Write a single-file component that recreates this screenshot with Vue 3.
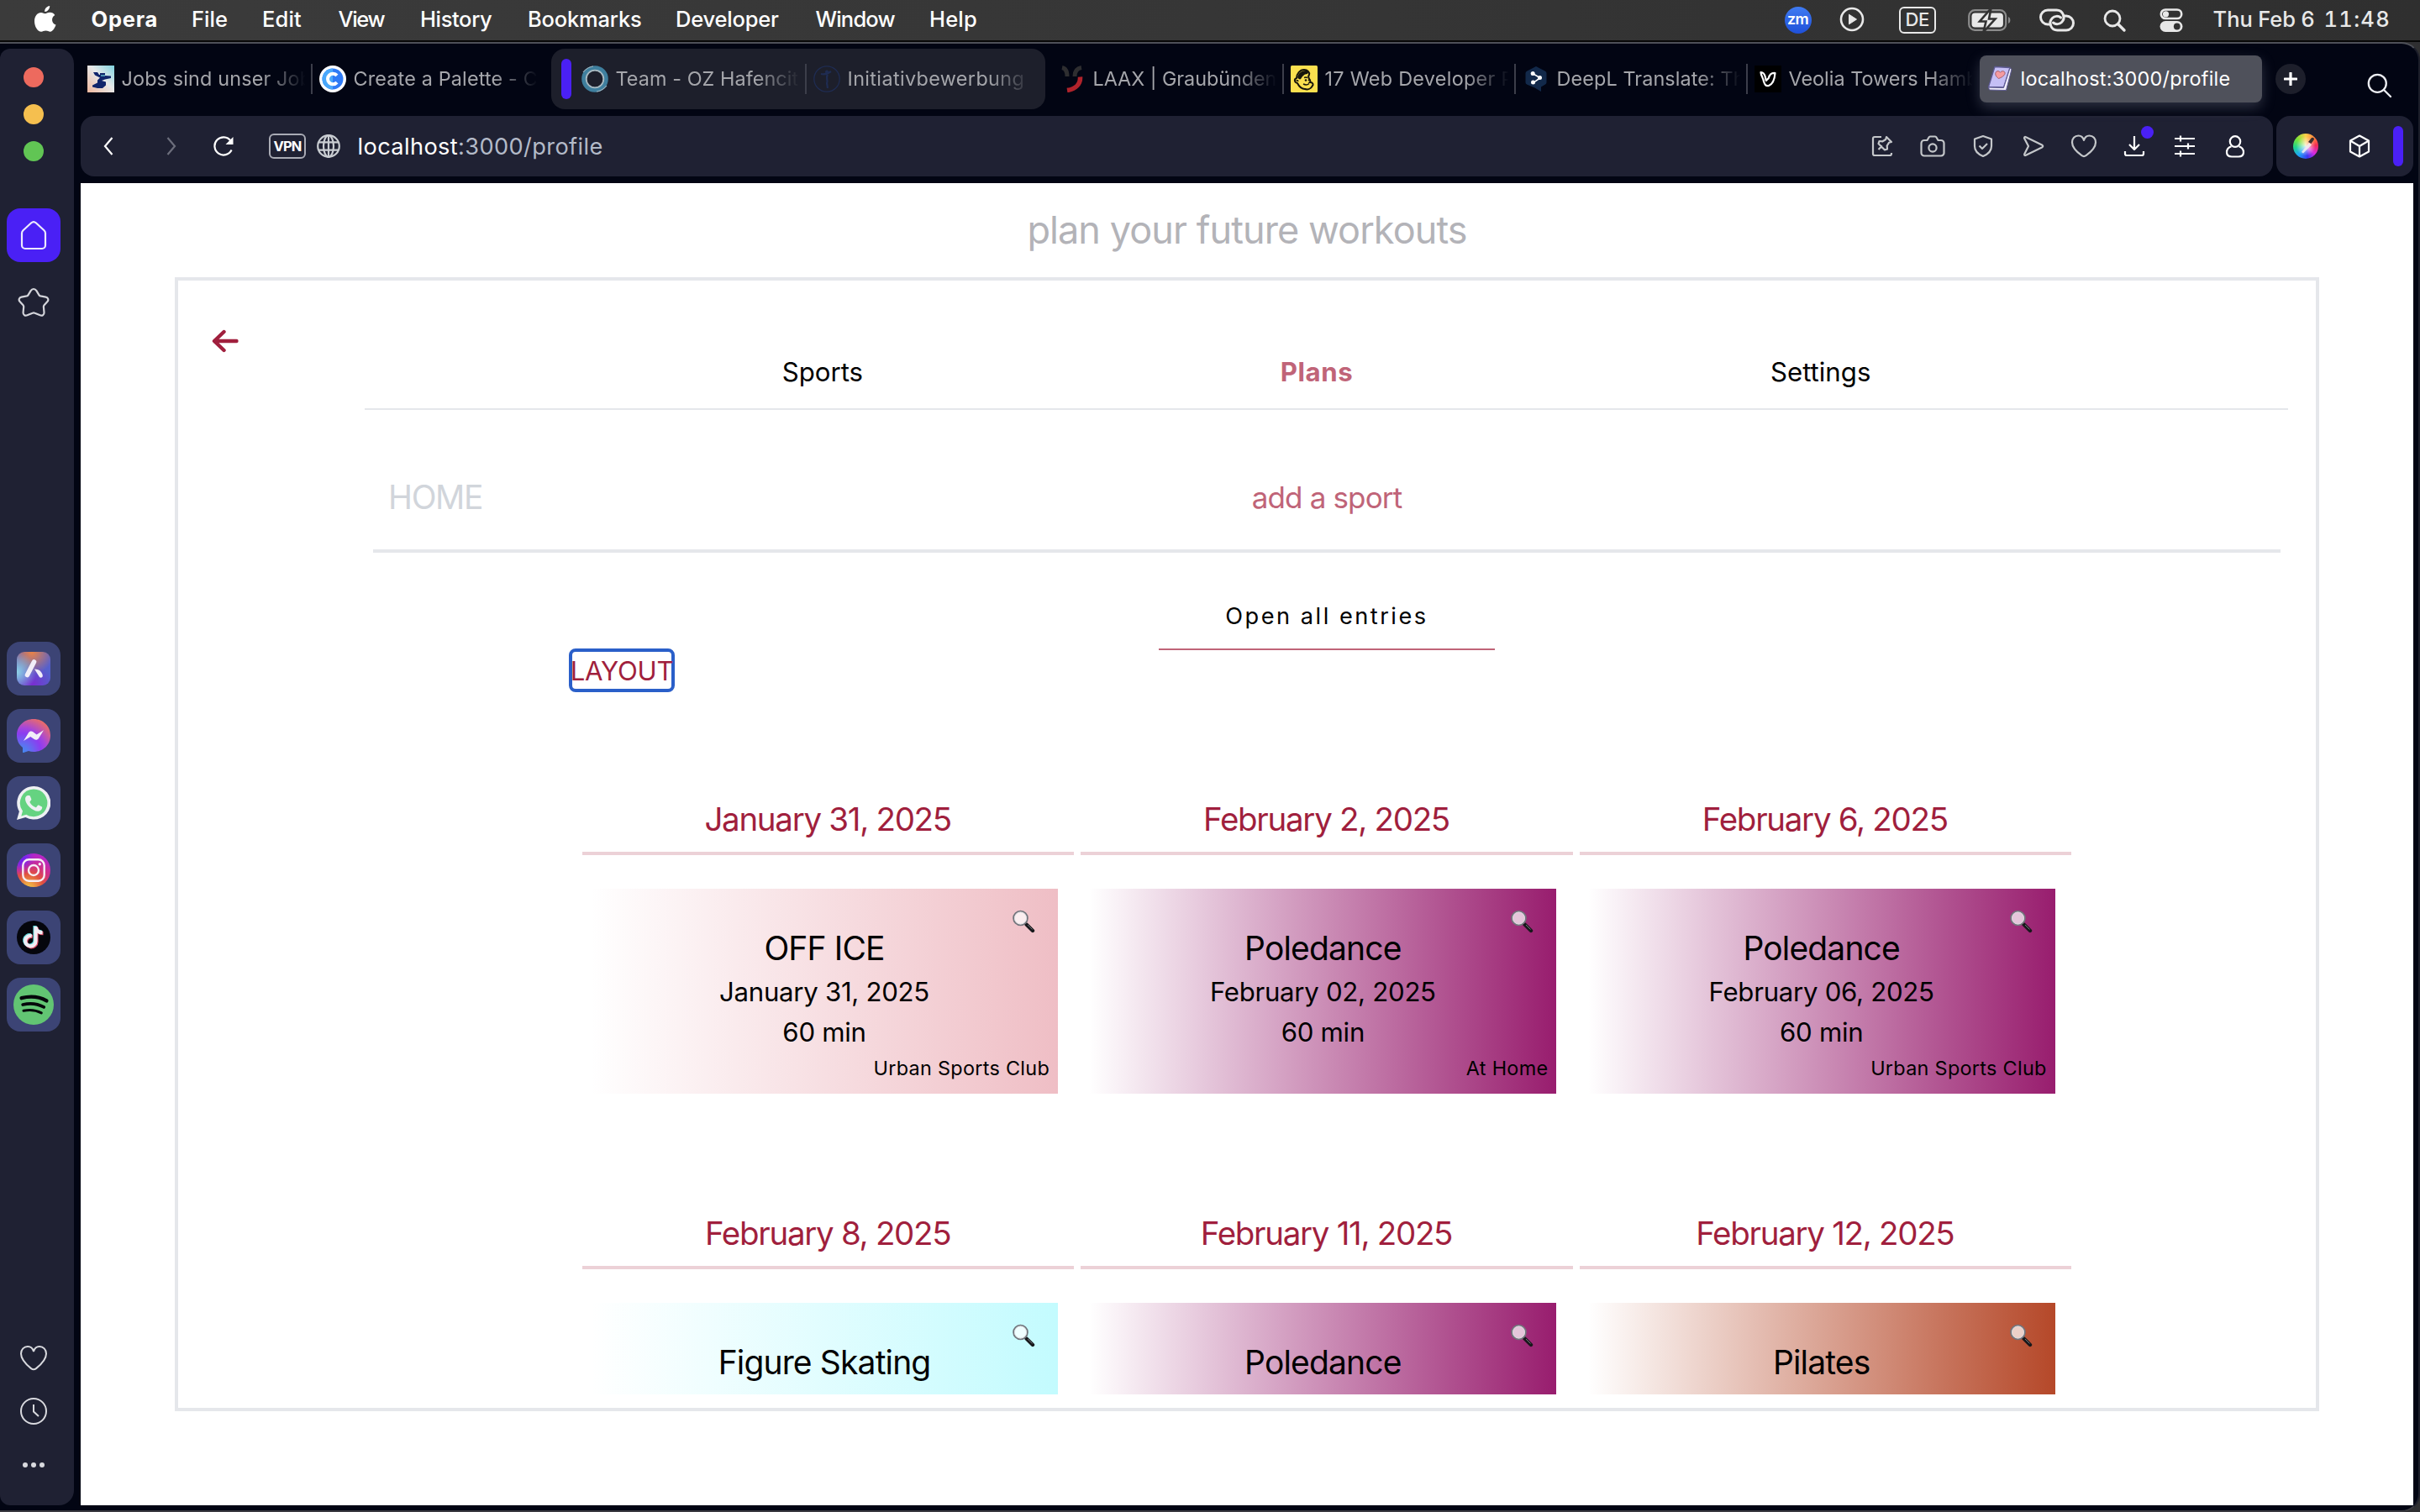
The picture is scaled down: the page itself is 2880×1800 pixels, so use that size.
<script setup>
const menus = [
  { label: 'Opera', width: 119.5, spacing: 0.76, bold: true },
  { label: 'File', width: 84, spacing: 0.04 },
  { label: 'Edit', width: 90.5, spacing: 0.14 },
  { label: 'View', width: 97.5, spacing: -1.35 },
  { label: 'History', width: 128, spacing: -0.37 },
  { label: 'Bookmarks', width: 176, spacing: -0.18 },
  { label: 'Developer', width: 166.5, spacing: -0.2 },
  { label: 'Window', width: 135.5, spacing: -0.82 },
  { label: 'Help', width: 60, spacing: 0.2 },
]

const sections = [
  { label: 'Sports', active: false },
  { label: 'Plans', active: true },
  { label: 'Settings', active: false },
]

const plans = [
  { day: 'January 31, 2025', sport: 'OFF ICE', date: 'January 31, 2025', minutes: 60, place: 'Urban Sports Club', color: '#efbec5' },
  { day: 'February 2, 2025', sport: 'Poledance', date: 'February 02, 2025', minutes: 60, place: 'At Home', color: '#981d6e' },
  { day: 'February 6, 2025', sport: 'Poledance', date: 'February 06, 2025', minutes: 60, place: 'Urban Sports Club', color: '#981d6e' },
  { day: 'February 8, 2025', sport: 'Figure Skating', color: '#c3fbfe' },
  { day: 'February 11, 2025', sport: 'Poledance', color: '#981d6e' },
  { day: 'February 12, 2025', sport: 'Pilates', color: '#b54829' },
]
</script>

<template>
  <div class="desktop">
    <header class="menubar">
      <svg class="apple" viewBox="0 0 26 31" width="26" height="31">
        <path fill="#fff" d="M18.2 0c.2 3.6-2.7 7-6 7C11.800 3.600 14.900.300 18.200 0ZM12.800 9.200c1.100 0 3.100-1.600 5.800-1.400 2.300.1 4.400 1.100 5.700 3.100-4.900 3.100-4 9.800 1.200 11.700-.9 2.900-3.500 8.200-6.700 8.200-2 0-2.900-1.200-5.300-1.200-2.500 0-3.500 1.200-5.300 1.200C3.700 30.800 0 24.500 0 18.300 0 11.900 3.900 7.900 7.800 7.900c2.200 0 3.900 1.300 5 1.300Z" />
      </svg>
      <nav class="menus">
        <span
          v-for="m in menus"
          :key="m.label"
          :class="{ strong: m.bold }"
          :style="{ width: m.width + 'px', letterSpacing: m.spacing + 'px' }"
        >{{ m.label }}</span>
      </nav>
      <div class="status">
        <span class="zoom-app">zm</span>
        <svg class="s-play" width="30" height="30" viewBox="0 0 30 30"><circle cx="15" cy="15" r="13" fill="none" stroke="#e8e8e8" stroke-width="2.600" /><path d="M11.500 9.200v11.600L20.500 15Z" fill="#e8e8e8" stroke="#e8e8e8" stroke-linejoin="round" /></svg>
        <span class="lang">DE</span>
        <svg class="s-bat" width="52" height="26" viewBox="0 0 52 26">
          <rect x="1.200" y="1.200" width="44" height="23.600" rx="7" fill="none" stroke="#8c8c8c" stroke-width="2.200" />
          <rect x="4.500" y="4.500" width="37.400" height="17" rx="4" fill="#e8e8e8" />
          <path d="M48 9v8c3.200-1.200 3.200-6.800 0-8Z" fill="#8c8c8c" />
          <path d="M27.500-1 14 14.500h7.500L18.500 27 32.500 11.500H25Z" fill="#e8e8e8" stroke="#323232" stroke-width="2.600" />
        </svg>
        <svg class="s-link" width="44" height="28" viewBox="0 0 44 28" fill="none" stroke="#e8e8e8" stroke-width="3" stroke-linecap="round">
          <path d="M14 19H11A8.500 8.500 0 0 1 11 2h10.500a8.500 8.500 0 0 1 6 14.500c-2.500 2.500-7 3-10 .5" />
          <path d="M30 9h3a8.500 8.500 0 0 1 0 17H22.500a8.500 8.500 0 0 1-6-14.500c2.500-2.500 7-3 10-.5" />
        </svg>
        <svg class="s-find" width="28" height="28" viewBox="0 0 28 28" fill="none" stroke="#e8e8e8" stroke-linecap="round"><circle cx="11" cy="11" r="9" stroke-width="2.800" /><path d="m18 18 7 7" stroke-width="3.400" /></svg>
        <svg class="s-ctl" width="28" height="28" viewBox="0 0 28 28">
          <rect x="1.800" y="1.500" width="24.400" height="10.500" rx="5.250" fill="none" stroke="#e8e8e8" stroke-width="2.600" /><circle cx="7.500" cy="6.800" r="3.600" fill="#e8e8e8" />
          <rect x="0.500" y="15" width="27" height="13" rx="6.500" fill="#e8e8e8" /><circle cx="20.800" cy="21.500" r="3.900" fill="#323232" />
        </svg>
        <span class="date">Thu Feb 6</span>
        <span class="clock">11:48</span>
      </div>
    </header>

    <div class="window">
      <aside class="sidebar">
        <div class="lights"><i class="red"></i><i class="amber"></i><i class="green"></i></div>
        <div class="tile home">
          <svg width="32" height="36" viewBox="0 0 32 36"><path d="M3.500 12.200 13.300 3.300a4 4 0 0 1 5.400 0l9.800 8.900q1.500 1.400 1.500 3.400V30a4 4 0 0 1-4 4H6a4 4 0 0 1-4-4V15.600q0-2 1.500-3.400Z" fill="none" stroke="#eceafd" stroke-width="2.200" /></svg>
        </div>
        <svg class="star" width="38" height="36" viewBox="0 0 38 36"><path d="M19 2c1.500 0 2.600.8 3.400 2.100l3 5c.4.700 1 1.100 1.800 1.300l6.300 1.300c2.800.6 3.700 3.400 1.900 5.400l-3.800 4.200c-.5.600-.8 1.300-.7 2.100l.6 6.400c.2 2.800-2.200 4.600-4.800 3.500l-6.200-2.600a3.500 3.500 0 0 0-2.900 0l-6.200 2.600c-2.600 1.100-5-.7-4.800-3.500l.6-6.400c.1-.8-.2-1.500-.7-2.100l-3.900-4.200c-1.800-2-.9-4.800 1.900-5.400l6.300-1.300c.8-.2 1.400-.6 1.800-1.300l3-5C16.400 2.800 17.500 2 19 2Z" fill="none" stroke="#d3d4da" stroke-width="2.200" /></svg>

        <div class="apps">
          <div class="tile">
            <span class="aria"><svg width="40" height="40" viewBox="0 0 40 40"><path d="M20.500 12 12.500 27.500" stroke="#f1eef8" stroke-width="5.600" stroke-linecap="round" /><path d="M21 20.500c5 .200 8.500 2.300 9.800 7.500.5 2.300-2.500 3.700-4 1.800Z" fill="#f1eef8" /></svg></span>
          </div>
          <div class="tile">
            <svg width="40" height="40" viewBox="0 0 40 40">
              <defs><radialGradient id="msg" cx="0.150" cy="1" r="1.150"><stop offset="0" stop-color="#3f8df2" /><stop offset="0.200" stop-color="#5c73f0" /><stop offset="0.500" stop-color="#8b3df0" /><stop offset="0.640" stop-color="#a445dc" /><stop offset="1" stop-color="#f2705c" /></radialGradient></defs>
              <path d="M20 0c11.500 0 20 8.500 20 19.500S31.500 39 20 39c-2.200 0-4.200-.3-6-.9L8 40c-.6.200-1-.1-1-.7V34C2.500 30.500 0 25.500 0 19.500 0 8.500 8.500 0 20 0Z" fill="url(#msg)" />
              <path d="M8 26 14 16.300c1.200-1.900 3.600-2.300 5.300-1l4.300 3.200L32 13.300l-6 9.800c-1.200 1.900-3.600 2.300-5.300 1l-4.400-3.200Z" fill="#f1eef8" />
            </svg>
          </div>
          <div class="tile">
            <svg width="40" height="40" viewBox="0 0 40 40">
              <path d="M20 0a20 19.800 0 1 1-9.600 37L0 40l2.900-10A20 20 0 0 1 20 0Z" fill="#eef0f3" />
              <path d="M20 3.400a16.400 16.400 0 1 1-8.700 30.300l-6 1.700 1.700-6A16.400 16.400 0 0 1 20 3.400Z" fill="#65d381" />
              <path d="M14.700 11c.5 0 1 .2 1.200.8l1.400 3.400c.2.600 0 1-.3 1.400l-1.300 1.600c-.3.400-.3.700-.1 1.100 1.500 2.700 3.700 4.600 6.500 5.800.5.200.8.100 1.100-.2l1.600-2c.4-.5.8-.6 1.300-.4l3.400 1.700c.5.300.8.500.7 1.300-.2 2.600-2.500 4.200-5 4.200C18.500 29.500 10 21.500 10 14.900c0-2.100 1.400-3.900 3.400-3.900Z" fill="#eef0f3" />
            </svg>
          </div>
          <div class="tile">
            <svg width="40" height="40" viewBox="0 0 40 40">
              <defs>
                <radialGradient id="igA" cx="0.350" cy="1.050" r="1"><stop offset="0" stop-color="#f0c948" /><stop offset="0.150" stop-color="#efa843" /><stop offset="0.450" stop-color="#e0503f" /><stop offset="0.700" stop-color="#d03085" /><stop offset="1" stop-color="#b827c4" /></radialGradient>
                <radialGradient id="igB" cx="0.080" cy="0.100" r="0.550"><stop offset="0" stop-color="#5a22f0" /><stop offset="0.400" stop-color="#7a26ee" stop-opacity="0.900" /><stop offset="1" stop-color="#b827c4" stop-opacity="0" /></radialGradient>
              </defs>
              <circle cx="20" cy="20" r="20" fill="url(#igA)" /><circle cx="20" cy="20" r="20" fill="url(#igB)" />
              <rect x="7.300" y="7.300" width="25.400" height="25.400" rx="7" fill="none" stroke="#f6eef4" stroke-width="2.400" />
              <circle cx="20" cy="20" r="6" fill="none" stroke="#f6eef4" stroke-width="2.400" /><circle cx="27.300" cy="12.800" r="1.700" fill="#f6eef4" />
            </svg>
          </div>
          <div class="tile">
            <svg width="40" height="40" viewBox="0 0 40 40" fill="none" stroke-width="4.200">
              <circle cx="20" cy="20" r="20" fill="#05060c" />
              <path d="M17.500 17.700a6.200 6.200 0 1 0 4.700 6V6.500c0 4 3 7.200 8 7.200" stroke="#5fd9dc" transform="translate(-.7 -.4)" />
              <path d="M17.500 17.700a6.200 6.200 0 1 0 4.700 6V6.500c0 4 3 7.200 8 7.200" stroke="#e0506a" transform="translate(1.300 1.500)" />
              <path d="M17.500 17.700a6.200 6.200 0 1 0 4.700 6V6.500c0 4 3 7.200 8 7.200" stroke="#f1eef4" transform="translate(.3 .5)" />
            </svg>
          </div>
          <div class="tile">
            <svg width="48" height="48" viewBox="0 0 48 48" fill="none" stroke="#05070a" stroke-linecap="round">
              <circle cx="24" cy="24" r="24" fill="#62c573" stroke="none" />
              <path d="M9.600 16.200c10-2.600 21-1.800 29.800 3.200" stroke-width="4.400" /><path d="M11.200 24c8.500-2.200 17.300-1.300 25 2.900" stroke-width="3.800" /><path d="M12 31.300c7.500-1.600 14.700-.9 21.300 2.600" stroke-width="3" />
            </svg>
          </div>
        </div>

        <div class="tools">
          <svg width="32" height="30" viewBox="0 0 32 30"><path d="M16 7C15 3 12 1 9 1 4.500 1 1 4.500 1 9.500c0 6.500 5 12 12 17.600q3 2.400 6 0C26 21.500 31 16 31 9.500 31 4.500 27.500 1 23 1c-3 0-6 2-7 6Z" fill="none" stroke="#d8d9de" stroke-width="2" /></svg>
          <svg class="history" width="32" height="32" viewBox="0 0 32 32" fill="none" stroke="#d8d9de" stroke-width="2"><circle cx="16" cy="16" r="15" /><path d="M16 8v8.500l6 5.500" /></svg>
          <svg class="more" width="26" height="6" viewBox="0 0 26 6" fill="#d8d9de"><circle cx="3" cy="3" r="3" /><circle cx="13" cy="3" r="3" /><circle cx="23" cy="3" r="3" /></svg>
        </div>
      </aside>

      <div class="browser">
        <div class="tabstrip">
          <div class="tab">
            <svg width="32" height="32" viewBox="0 0 32 32">
              <defs><linearGradient id="jb" x1="1" y1="0" x2="0" y2="1"><stop offset="0" stop-color="#7fd3e0" /><stop offset="0.450" stop-color="#e6e9ea" /><stop offset="1" stop-color="#f0b89e" /></linearGradient></defs>
              <rect width="32" height="32" fill="url(#jb)" />
              <path d="M7 8h5l2 3h1V9h6v3l7 .5v2.500l-7 1.500-4 1.500 5 1.500v4l-4 3.500h-6l-6-1.500v-2l6-3v-3l3-3-6-3Z" fill="#10256b" />
              <path d="M16 11h5v2h-5Z" fill="#4a8fb0" />
            </svg>
            <span class="t" style="letter-spacing: 0.14px">Jobs sind unser Job</span>
          </div>
          <div class="tab split">
            <svg width="32" height="32" viewBox="0 0 32 32">
              <circle cx="16" cy="16" r="16" fill="#fff" /><circle cx="16" cy="16" r="12.500" fill="#2f7bf6" /><path d="M16 3.500a12.500 12.500 0 0 0 0 25Z" fill="#49a8fb" />
              <path d="M21 11.800a6.300 6.300 0 1 0 0 8.400" fill="none" stroke="#fff" stroke-width="4" />
            </svg>
            <span class="t" style="letter-spacing: 0.15px">Create a Palette - C</span>
          </div>
          <div class="island">
            <i class="bar"></i>
            <div class="tab">
              <svg width="32" height="32" viewBox="0 0 32 32" fill="none"><circle cx="16" cy="16" r="12.800" stroke="#3f7f9e" stroke-width="6" /><circle cx="16" cy="16" r="10.300" stroke="#a9b9c0" stroke-width="1.800" /><path d="M2 8C6 3 9 1.500 14 1M18 31c5-.5 8-2 12-7" stroke="#9fb4bf" stroke-width="1.200" /></svg>
              <span class="t" style="letter-spacing: 0.07px">Team - OZ Hafencit</span>
            </div>
            <div class="tab split">
              <svg width="32" height="32" viewBox="0 0 32 32" fill="none" stroke="#1f2c52"><circle cx="16" cy="16" r="15.200" stroke-width="1.300" /><path d="M9 10c4 1 8 0 12-3M17 11c-3 4 1 6-1 10l1 6" stroke-width="2.200" /><circle cx="16" cy="7.500" r="1.600" fill="#1f2c52" /></svg>
              <span class="t" style="letter-spacing: 0.36px">Initiativbewerbung |</span>
            </div>
          </div>
          <div class="tab">
            <svg width="32" height="32" viewBox="0 0 32 32" fill="none" stroke-width="5"><path d="M4 2.500c5 1 6 5 6 10.500M27 2.500c-6 1-8 5-8 10.500" stroke="#2e2e30" /><path d="M25.500 13.500C26 22 20 28 10 29.500" stroke="#b0232b" stroke-width="5.600" /></svg>
            <span class="t" style="letter-spacing: -0.05px">LAAX | Graubünden</span>
          </div>
          <div class="tab split">
            <svg width="32" height="32" viewBox="0 0 32 32">
              <rect width="32" height="32" rx="1.500" fill="#fbe04f" />
              <path d="M8 21c-4-1-4-5-1-6 0-5 4-10 9-10 4 0 7 3 6 6-1 1-1 3 0 5 1 1 2 3 1 4 4 0 4 3 3 4-2 4-6 5-9 4-4 0-7-3-9-7Z" fill="none" stroke="#17150c" stroke-width="2" />
              <path d="M8 14c1-5 5-8 10-8 3 0 4 2 2 4-4 0-6 3-8 6-1 1-3 0-4-2Z" fill="#17150c" /><path d="M16 14.500q2-1 4 0M15 22q4 2 7-.5M6.500 18q2-1 2.500 1" stroke="#17150c" stroke-width="1.500" fill="none" /><circle cx="18" cy="17.500" r="1.300" fill="#17150c" /><circle cx="21.800" cy="17.500" r="1.100" fill="#17150c" />
            </svg>
            <span class="t" style="letter-spacing: 0.28px">17 Web Developer P</span>
          </div>
          <div class="tab split">
            <svg width="32" height="32" viewBox="0 0 32 32">
              <path d="M16 1 27 6.800q1.500.8 1.500 2.500V20q0 1.600-1.500 2.500l-5 3V31l-7.500-4.500L5 22.500Q3.500 21.600 3.500 20V9.300Q3.500 7.600 5 6.800Z" fill="#12294a" />
              <path d="m12 9.500 9 5.200-8.500 6" stroke="#fff" stroke-width="1.600" fill="none" /><g fill="#fff"><circle cx="12.200" cy="9.500" r="2.500" /><circle cx="20.500" cy="14.500" r="2.500" /><circle cx="12.500" cy="20" r="2.500" /></g>
            </svg>
            <span class="t" style="letter-spacing: 0.1px">DeepL Translate: Th</span>
          </div>
          <div class="tab split">
            <svg width="32" height="32" viewBox="0 0 32 32"><rect width="32" height="32" fill="#000" /><path d="M7.500 8c3 .3 4.500 2 5.300 5.500l1 4.500 3-3c1-4 3.500-6.500 7.700-6-.5 7-2.500 13-7.500 15-4 1-5-2-6-5C10.500 15 7.500 12 7.500 8Z" fill="none" stroke="#fff" stroke-width="2.200" stroke-linejoin="round" /></svg>
            <span class="t">Veolia Towers Hamb</span>
          </div>
          <div class="tab current">
            <svg width="32" height="32" viewBox="0 0 32 32">
              <path d="M10 1.500 28 2.500 20.500 26 2.500 25.500Z" fill="#c5bff5" stroke="#5d5a92" stroke-width="1.300" stroke-linejoin="round" />
              <path d="M2.500 26 20.500 26.500 28 3l2 1.500-6.500 25-20-.5Z" fill="#f2effc" stroke="#5d5a92" stroke-width="1" stroke-linejoin="round" />
              <path d="M14.500 15.500c-4-3-4.500-6-3-8 1.500-1.500 4-1 5 .8 1.200-1.800 4-2.300 5.300-.4 1.200 2-1.300 5.600-7.300 7.600Z" fill="#f59ba0" stroke="#9c5560" stroke-width=".9" />
            </svg>
            <span class="t" style="letter-spacing: 0.26px">localhost:3000/profile</span>
          </div>
          <span class="plus"><svg width="16" height="16" viewBox="0 0 16 16"><path d="M8 1v14M1 8h14" stroke="#fff" stroke-width="3.200" stroke-linecap="round" /></svg></span>
          <svg class="tab-search" width="30" height="30" viewBox="0 0 30 30" fill="none" stroke="#eceef2" stroke-width="2.300"><circle cx="12.300" cy="12.300" r="10.500" /><path d="m20 20 8 8" stroke-linecap="round" /></svg>
        </div>

        <div class="toolbar">
          <div class="address">
            <svg class="back" width="12" height="22" viewBox="0 0 12 22" fill="none" stroke="#fff" stroke-width="2.200"><path d="M10.500 1 2 11l8.500 10" /></svg>
            <svg class="fwd" width="12" height="22" viewBox="0 0 12 22" fill="none" stroke="#6c6e7c" stroke-width="2.200"><path d="M1.500 1 10 11 1.500 21" /></svg>
            <svg class="reload" width="26" height="26" viewBox="0 0 26 26"><path d="M22.600 17.500A10.600 10.600 0 1 1 21.500 6.500" fill="none" stroke="#fff" stroke-width="2.200" /><path d="M24.500 2v9h-9Z" fill="#fff" /></svg>
            <span class="vpn">VPN</span>
            <svg class="globe" width="28" height="28" viewBox="0 0 28 28" fill="none" stroke="#c9cdd2" stroke-width="2.200"><circle cx="14" cy="14" r="12.800" /><ellipse cx="14" cy="14" rx="6" ry="12.800" /><path d="M14 1v26M2.500 9.300h23M2.500 18.700h23" /></svg>
            <span class="url"><b>localhost</b>:3000/profile</span>
            <div class="actions">
              <svg class="a-pin" viewBox="0 0 26 26" width="26" height="26" stroke="#c4c7ca"><path d="M12 2H4a2 2 0 0 0-2 2v18a2 2 0 0 0 2 2h18a2 2 0 0 0 2-2v-1" /><path d="m8.500 17 4.500-4.500M18 2l6 6-3 .8-2.300 3.700.3 4-3 1-7.500-7.500 1-3 4 .3L17.200 5Z" /></svg>
              <svg class="a-cam" viewBox="0 0 30 26" width="30" height="26" stroke="#c4c7ca"><path d="M5 6h3.500l2-3.500Q11 1.500 12 1.500h6q1 0 1.500 1L21.500 6H25a3.500 3.500 0 0 1 3.500 3.500v11A3.500 3.500 0 0 1 25 24.500H5a3.500 3.500 0 0 1-3.500-3.500V9.500A3.500 3.500 0 0 1 5 6Z" /><circle cx="15" cy="15" r="4.600" /></svg>
              <svg class="a-shield" viewBox="0 0 24 28" width="24" height="28" stroke="#c4c7ca"><path d="m12 2 10 3.500v8.500c0 5-4 9.500-10 12-6-2.500-10-7-10-12V5.500Z" /><path d="m7.500 13.500 3.500 3.500 6-6" /></svg>
              <svg class="a-send" viewBox="0 0 26 26" width="26" height="26" stroke="#c4c7ca"><path d="M2 3.500Q2 1.300 4 2.200l19 9.300q2.500 1.500 0 3L4 23.800q-2 .9-1.800-1.300L7 13Z" /></svg>
              <svg class="a-heart" viewBox="0 0 32 28" width="32" height="28" stroke="#c4c7ca"><path d="M16 7C15 3.500 12.500 1.500 9.500 1.500 5 1.500 2 5 2 9.500c0 6 5 11 11.500 15.700q2.500 1.800 5 0C25 20.500 30 15.500 30 9.500c0-4.500-3-8-7.500-8-3 0-5.500 2-6.500 5.500Z" /></svg>
              <span class="dl"><svg viewBox="0 0 26 26" width="26" height="26" stroke="#fff"><path d="M13 1v16m-6-6 6 6 6-6M2 19v3a2 2 0 0 0 2 2h18a2 2 0 0 0 2-2v-3" /></svg><i></i></span>
              <svg class="a-tune" viewBox="0 0 26 26" width="26" height="26" stroke="#fff"><path d="M1 4h24M1 13h24M1 22h24M8 .5v7M17 9.500v7M8 18.500v7" /></svg>
              <svg class="a-user" viewBox="0 0 24 27" width="24" height="27" stroke="#fff"><ellipse cx="12" cy="7.500" rx="6.200" ry="6.300" /><path d="M7.500 13.300C4 14.500 2 17 2 20.300 2 24 4.500 25.500 8 25.500h8c3.500 0 6-1.500 6-5.200 0-3.300-2-5.800-5.500-7" /></svg>
            </div>
          </div>
          <div class="extensions">
            <span class="wheel"><svg width="30" height="30" viewBox="0 0 30 30"><path d="m10 22 9-11 3 2.500L12 23.500Z" fill="#f1f1f1" opacity=".85" /><path d="m18 10 4-5q3-1 3 2l-3.500 5Z" fill="#39302f" /></svg></span>
            <svg class="cube" width="26" height="28" viewBox="0 0 26 28" fill="none" stroke="#fff" stroke-width="2.200" stroke-linejoin="round"><path d="m13 1.500 11 6v13l-11 6-11-6v-13ZM2 7.500l11 6.500 11-6.500M13 14v12.500" /></svg>
            <i class="bar"></i>
          </div>
        </div>

        <main class="page">
          <h1>plan your future workouts</h1>
          <section class="frame">
            <div class="aside">
              <svg width="32" height="28" viewBox="0 0 32 28" fill="none" stroke="#a01f3d" stroke-width="4.400" stroke-linecap="round" stroke-linejoin="round"><path d="M29.500 14H4M14.500 3 3 14l11.500 11" /></svg>
            </div>
            <div class="content">
              <nav class="sections">
                <a v-for="s in sections" :key="s.label" :class="{ active: s.active }">{{ s.label }}</a>
              </nav>
              <div class="subnav">
                <a class="crumb">HOME</a>
                <a class="add">add a sport</a>
              </div>
              <button class="open">Open all entries</button>
              <button class="layout">LAYOUT</button>
              <div class="grid">
                <article v-for="p in plans" :key="p.day" class="plan">
                  <h2>{{ p.day }}</h2>
                  <div class="card" :style="{ backgroundImage: `linear-gradient(to right, transparent, ${p.color})` }">
                    <svg class="lens" width="28" height="28" viewBox="0 0 28 28">
                      <path d="m17.500 17.500 7.500 7.500" stroke="#17181b" stroke-width="4.400" stroke-linecap="round" /><path d="m19 18 5.500 5.500" stroke="#73777d" stroke-width="1" />
                      <circle cx="10.500" cy="10" r="8.400" fill="#fff" fill-opacity=".72" stroke="#72757c" stroke-width="1.800" /><circle cx="10.500" cy="10" r="7" fill="none" stroke="#d9dce0" stroke-width=".8" />
                    </svg>
                    <h3>{{ p.sport }}</h3>
                    <template v-if="p.date">
                      <p>{{ p.date }}</p>
                      <p>{{ p.minutes }} min</p>
                      <small>{{ p.place }}</small>
                    </template>
                  </div>
                </article>
              </div>
            </div>
          </section>
        </main>
      </div>
    </div>
  </div>
</template>

<style>
body {
  margin: 0;
  background: #3a3a3a;
}
</style>

<style scoped>
* {
  box-sizing: border-box;
}
.desktop {
  width: 2880px;
  height: 1800px;
  overflow: hidden;
  display: flex;
  flex-direction: column;
  background: #2f2f31;
  font-family: Inter, "Liberation Sans", sans-serif;
  font-size: 23.4px;
}
svg {
  display: block;
  flex: none;
}
h1, h2, h3, p {
  margin: 0;
  font-weight: 400;
}

/* menu bar */
.menubar {
  flex: none;
  height: 50px;
  padding: 0 35px 0 41px;
  display: flex;
  align-items: flex-start;
  background: linear-gradient(90deg, #3b3b3b, #363636 50%, #2f2f2f);
  color: #fff;
  font-size: 25.5px;
  font-weight: 500;
  line-height: 46px;
  white-space: nowrap;
  border-bottom: 2px solid #080808;
}
.apple {
  margin: 7px 41.5px 0 0;
}
.menus {
  display: flex;
}
.menus span {
  flex: none;
}
.strong {
  font-weight: 700;
}
.status {
  margin-left: auto;
  display: flex;
  color: #e8e8e8;
}
.zoom-app {
  width: 32px;
  height: 32px;
  margin-top: 8px;
  border-radius: 50%;
  background: linear-gradient(#3f7bf2, #1f50d8);
  color: #fff;
  font-size: 18px;
  font-weight: 600;
  line-height: 29px;
  text-align: center;
  letter-spacing: -0.5px;
}
.s-play { margin: 8px 0 0 33px; }
.lang {
  width: 44px;
  height: 32px;
  margin: 8px 0 0 41px;
  border: 2.600px solid #e8e8e8;
  border-radius: 6px;
  font-size: 22px;
  line-height: 27px;
  text-align: center;
  letter-spacing: -0.5px;
}
.s-bat { margin: 11px 0 0 38px; }
.s-link { margin: 10px 0 0 32px; }
.s-find { margin: 11px 0 0 33px; }
.s-ctl { margin: 10px 0 0 39px; }
.date {
  margin-left: 36px;
  letter-spacing: -0.1px;
}
.clock {
  margin-left: 11px;
  letter-spacing: 1.3px;
  font-feature-settings: "tnum";
}

/* window */
.window {
  flex: 1;
  display: flex;
  min-height: 0;
  background: #020513;
  border-top: 2px solid #4e5058;
  border-bottom: 2px solid #3a3a40;
  border-right: 2px solid #1c1e2a;
  border-radius: 0 22px 22px 0;
}
.sidebar {
  flex: none;
  width: 88px;
  margin: 6px 8px 6px 0;
  padding: 22px 16px 0 8px;
  display: flex;
  flex-direction: column;
  align-items: center;
  background: #1f2133;
  border-radius: 12px 18px 18px 12px;
}
.lights {
  display: flex;
  flex-direction: column;
  gap: 20px;
}
.lights i {
  width: 24px;
  height: 24px;
  border-radius: 50%;
}
.red { background: #ed6a5e; }
.amber { background: #f5bf4f; }
.green { background: #61c554; }
.tile {
  flex: none;
  width: 64px;
  height: 64px;
  display: flex;
  align-items: center;
  justify-content: center;
  border-radius: 16px;
  background: #3c4475;
}
.home {
  margin-top: 56px;
  background: #4a20f5;
}
.star { margin-top: 30px; }
.apps {
  margin-top: 386px;
  display: flex;
  flex-direction: column;
  gap: 16px;
}
.aria {
  border-radius: 9px;
  background:
    radial-gradient(circle at 0 60%, #8fd3e6, transparent 50%),
    radial-gradient(circle at 45% 0, #ec8345, transparent 58%),
    radial-gradient(circle at 45% 100%, #7a2bd0, transparent 55%),
    #5560cc;
}
.tools {
  margin-top: 374px;
  display: flex;
  flex-direction: column;
  align-items: center;
}
.history { margin-top: 32px; }
.more { margin-top: 45px; }

.browser {
  flex: 1;
  min-width: 0;
  display: flex;
  flex-direction: column;
}

/* tabs */
.tabstrip {
  flex: none;
  height: 86px;
  padding-top: 6px;
  display: flex;
  align-items: flex-start;
}
.tab {
  flex: none;
  position: relative;
  width: 276px;
  height: 72px;
  padding: 0 8px;
  display: flex;
  align-items: center;
  color: #a5a6ab;
  line-height: 36px;
  white-space: nowrap;
}
.t {
  flex: 1;
  min-width: 0;
  margin: -1px 0 0 8.5px;
  overflow: hidden;
  -webkit-mask-image: linear-gradient(90deg, #000 76%, transparent);
  mask-image: linear-gradient(90deg, #000 76%, transparent);
}
.split::before {
  content: "";
  position: absolute;
  left: -2px;
  top: 18px;
  width: 2px;
  height: 36px;
  background: #3c3e4a;
}
.island {
  flex: none;
  display: flex;
  align-items: center;
  margin: 0 8px;
  padding: 0 8px 0 12px;
  height: 72px;
  border-radius: 16px;
  background: #1d1f2b;
}
.bar {
  width: 12px;
  height: 48px;
  border-radius: 6px;
  background: #4a20f5;
}
.island .bar { margin-right: 4px; }
.current {
  width: 336px;
  height: 56px;
  margin-top: 8px;
  border-radius: 8px;
  background: #4f515b;
  color: #fff;
  box-shadow: 0 6px 16px rgba(160, 164, 190, 0.28);
}
.current .t {
  -webkit-mask-image: none;
  mask-image: none;
}
.plus {
  width: 36px;
  height: 36px;
  margin: 18px 0 0 16px;
  display: flex;
  align-items: center;
  justify-content: center;
  border-radius: 50%;
  background: #1d1f2b;
}
.tab-search { margin: 29px 0 0 73px; }

/* toolbar */
.toolbar {
  flex: none;
  height: 72px;
  display: flex;
  gap: 4px;
}
.address {
  width: 2609px;
  display: flex;
  align-items: center;
  background: #1f2133;
  border-radius: 16px;
}
.back { margin-left: 27px; }
.fwd { margin-left: 63px; }
.reload { margin-left: 43px; }
.vpn {
  width: 44px;
  height: 30px;
  margin-left: 41px;
  border: 2px solid #a9abb5;
  border-radius: 6px;
  color: #fff;
  font-size: 16.500px;
  font-weight: 700;
  line-height: 27px;
  text-align: center;
  letter-spacing: -0.9px;
}
.globe { margin-left: 13px; }
.url {
  margin: 1px 0 0 20.500px;
  color: #b3bac8;
  font-size: 27.200px;
  line-height: 40px;
  letter-spacing: 0.38px;
}
.url b {
  font-weight: 400;
  color: #fff;
}
.actions {
  flex: 1;
  margin-right: 33px;
  display: flex;
  align-items: center;
  justify-content: flex-end;
}
.actions svg {
  fill: none;
  stroke-width: 2.200px;
  stroke-linejoin: round;
}
.a-cam { margin-left: 32px; }
.a-shield { margin-left: 33px; }
.a-send { margin-left: 35px; }
.a-heart { margin-left: 31px; }
.dl {
  position: relative;
  margin-left: 31px;
}
.a-tune { margin-left: 34px; }
.a-user { margin-left: 35px; }
.dl i {
  position: absolute;
  left: 21px;
  top: -11px;
  width: 15px;
  height: 15px;
  border-radius: 50%;
  background: #4a20f5;
}
.extensions {
  width: 163px;
  padding: 0 12px 0 20px;
  display: flex;
  align-items: center;
  background: #1f2133;
  border-radius: 16px;
}
.cube { margin: 0 27px 0 36px; }
.wheel {
  width: 30px;
  height: 30px;
  border-radius: 50%;
  background:
    radial-gradient(circle, rgba(255, 255, 255, 0.85), transparent 55%),
    conic-gradient(#ffd04a, #ff7a3c 50deg, #f02a55 85deg, #d92be0 130deg, #3a35f2 170deg, #1ea8f5 220deg, #20d58a 265deg, #7be336 310deg, #ffd04a);
}

/* page */
.page {
  flex: 1;
  min-height: 0;
  margin: 8px 6px 6px 0;
  padding: 26px 112px 0;
  background: #fff;
}
h1 {
  height: 86px;
  color: #b3b3b8;
  font-size: 45px;
  line-height: 60px;
  letter-spacing: -0.92px;
  text-align: center;
}
.frame {
  height: 1350px;
  padding-bottom: 16px;
  display: flex;
  border: 4px solid #e5e7eb;
}
.aside {
  flex: none;
  width: 222px;
  padding: 58px 0 0 39.500px;
}
.content {
  width: 2289px;
  overflow: hidden;
}
.sections {
  height: 154px;
  padding-top: 89px;
  display: flex;
  justify-content: space-evenly;
  border-bottom: 2px solid #e5e7eb;
  color: #000;
  font-size: 31.200px;
  line-height: 40px;
}
.active {
  color: #c06478;
  font-weight: 700;
  letter-spacing: 0.6px;
}
.subnav {
  height: 170px;
  margin: 0 9px 0 10px;
  padding: 80px 17px 0;
  display: grid;
  grid-template-columns: 1fr auto 1fr;
  border-bottom: 4px solid #e5e7eb;
  line-height: 48px;
}
.crumb {
  padding-left: 1px;
  color: #d1d5db;
  font-size: 39px;
  letter-spacing: -1.350px;
}
.add {
  color: #c06478;
  font-size: 35px;
  letter-spacing: -0.850px;
}
button {
  display: block;
  padding: 0;
  border: 0;
  background: none;
  font: inherit;
}
.open {
  width: 400px;
  height: 61px;
  margin: 55px 0 0 945px;
  padding-bottom: 18px;
  border-bottom: 2px solid #c06478;
  color: #000;
  font-size: 27.200px;
  line-height: 40px;
  letter-spacing: 2.500px;
  text-align: center;
}
.layout {
  width: 126px;
  height: 52px;
  margin: -2px 0 0 243px;
  border: 4px solid #2a5fc9;
  border-radius: 8px;
  color: #a01f3d;
  font-size: 31.200px;
  line-height: 46px;
  letter-spacing: -0.250px;
  display: flex;
  justify-content: center;
}
.grid {
  width: 1772px;
  margin: 127px 0 0 259px;
  display: grid;
  grid-template-columns: repeat(3, 1fr);
  gap: 142px 8px;
}
h2 {
  height: 67px;
  padding-right: 1px;
  border-bottom: 4px solid #ecd1d7;
  color: #a01f3d;
  font-size: 38.500px;
  line-height: 49px;
  letter-spacing: -1.300px;
  text-align: center;
}
.card {
  position: relative;
  width: 95%;
  height: 244px;
  margin: 40px 0 0 10px;
  padding-top: 43px;
  color: #000;
  text-align: center;
}
.lens {
  position: absolute;
  right: 27px;
  top: 25px;
}
h3 {
  font-size: 39px;
  line-height: 56px;
  letter-spacing: -0.850px;
}
p {
  font-size: 31.200px;
  line-height: 48px;
  letter-spacing: -0.290px;
}
small {
  display: block;
  margin: 3px 10px 0 0;
  font-size: 23.400px;
  line-height: 32px;
  letter-spacing: 0.300px;
  text-align: right;
}
</style>
